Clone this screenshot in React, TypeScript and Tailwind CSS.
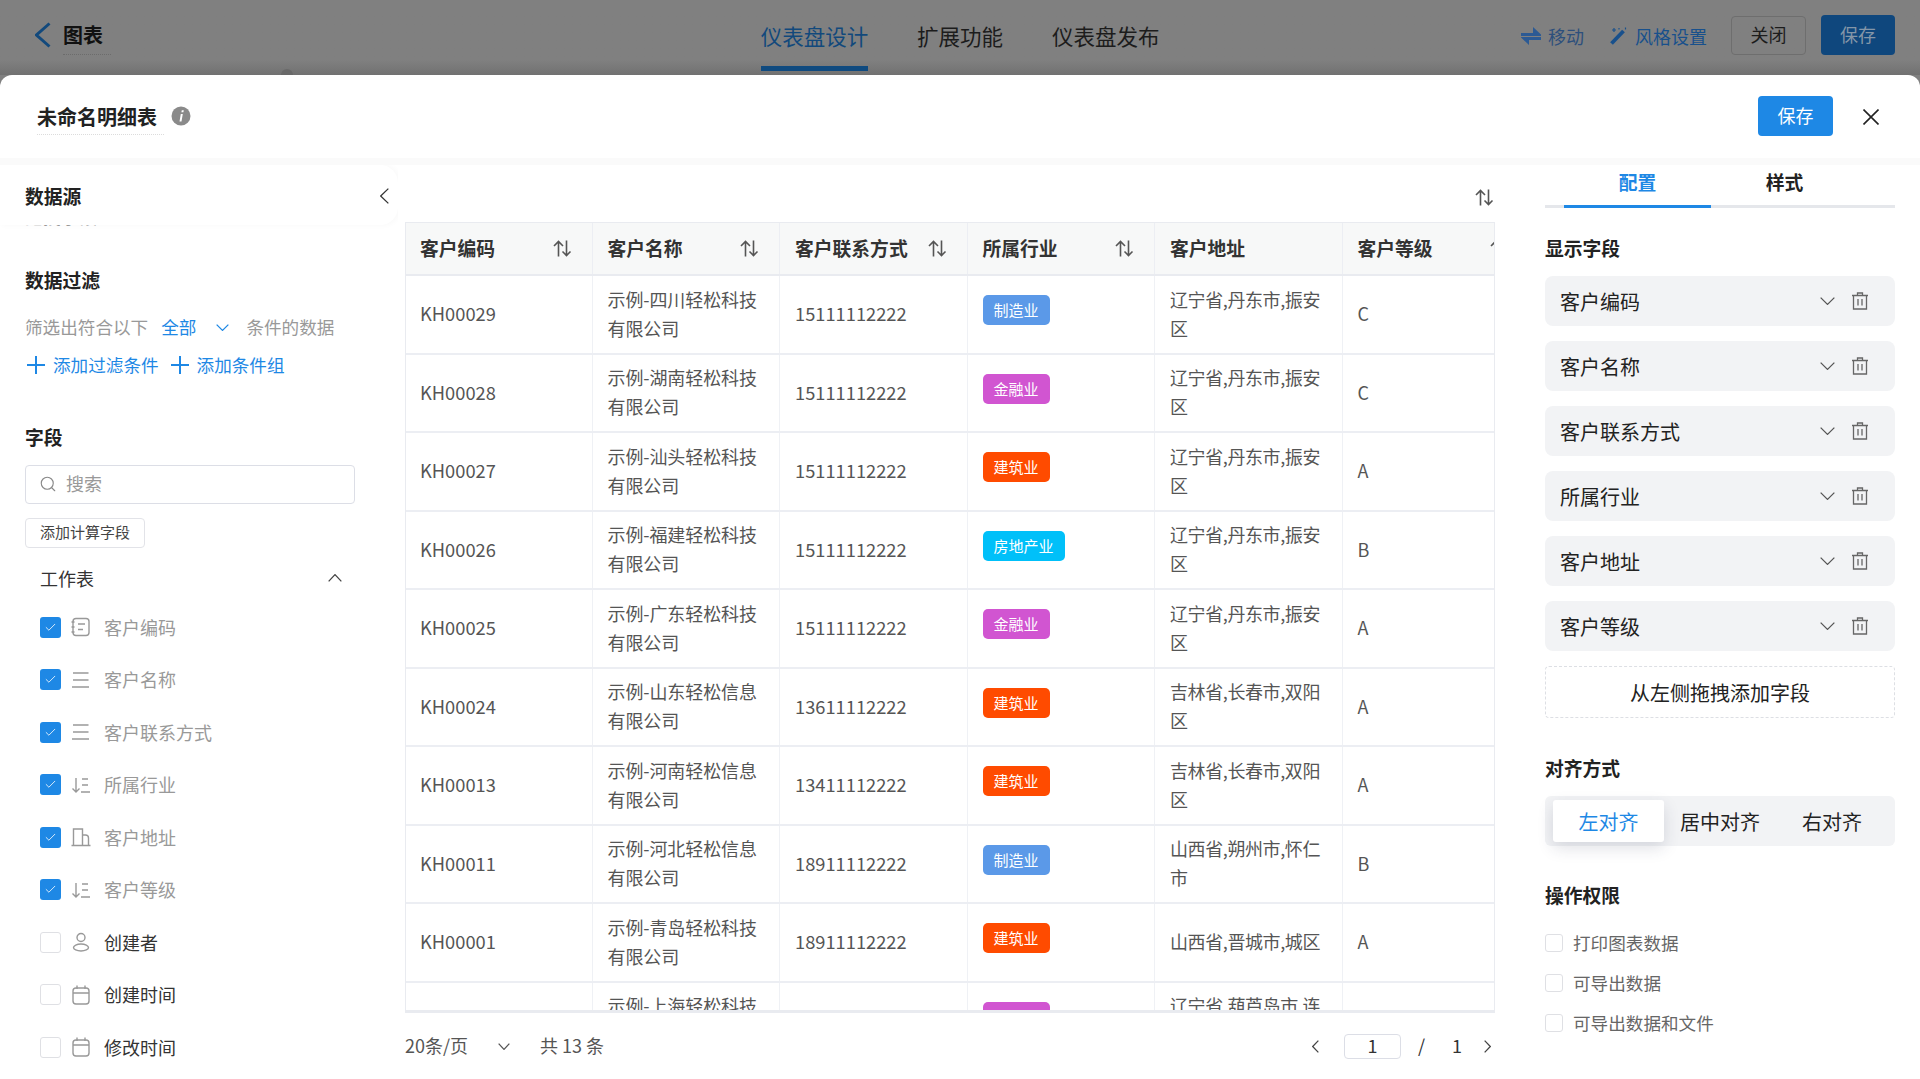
import React from "react";
import { Check, Search } from "lucide-react";

function Chev({ dir, w, h, color = "#555", sw = 1.5, className = "" }: { dir: "l" | "r" | "u" | "d"; w: number; h: number; color?: string; sw?: number; className?: string }) {
  const m = sw / 2;
  const d =
    dir === "l" ? `M${w - m} ${m}L${m} ${h / 2}L${w - m} ${h - m}` :
    dir === "r" ? `M${m} ${m}L${w - m} ${h / 2}L${m} ${h - m}` :
    dir === "u" ? `M${m} ${h - m}L${w / 2} ${m}L${w - m} ${h - m}` :
    `M${m} ${m}L${w / 2} ${h - m}L${w - m} ${m}`;
  return (
    <svg viewBox={`0 0 ${w} ${h}`} width={w} height={h} fill="none" stroke={color} strokeWidth={sw} className={className}>
      <path d={d} />
    </svg>
  );
}

function PlusIcon({ className = "" }: { className?: string }) {
  return (
    <svg viewBox="0 0 18 18" width="18" height="18" fill="none" stroke="#1e88e5" strokeWidth="2" className={className}>
      <path d="M0 9h18M9 0v18" />
    </svg>
  );
}

function SortIcon({ className = "" }: { className?: string }) {
  return (
    <svg viewBox="0 0 19 17" width="19" height="17" fill="none" stroke="#555" strokeWidth="1.6" className={className}>
      <path d="M5.5 16.5V1.5M1 6l4.5-4.5L10 6" />
      <path d="M13.5 .5v15M9.5 11.5l4 4 4-4" />
    </svg>
  );
}

function TrashIcon() {
  return (
    <svg viewBox="0 0 18 18" width="18" height="18" fill="none" stroke="#666" strokeWidth="1.3">
      <path d="M1 3.5h16M6.5 3.5V1h5v2.500M2.500 3.500V17h13V3.500M7 7v6.500M11 7v6.500" />
    </svg>
  );
}

function FieldIcon({ kind }: { kind: string }) {
  const p = { fill: "none", stroke: "#999", strokeWidth: 1.4 };
  return (
    <svg viewBox="0 0 20 20" width="20" height="20" {...p}>
      {kind === "id" && (
        <>
          <rect x="2" y="1.500" width="16" height="17" rx="3" />
          <path d="M7 7h7M7 12.500h5M.5 5h3M.5 10h3M.5 15h3" />
        </>
      )}
      {kind === "text" && <path d="M2 3h15.500M2 10h15.500M1 17h17" />}
      {kind === "num" && <path d="M5 3v14M1.500 13.500 5 17l3.500-3.500M11 4h6M11 10h6M10 17h9" />}
      {kind === "geo" && <path d="M0.500 18.500h19M2.500 18.500V2h9v16.500M11.500 8h3a3 3 0 0 1 3 3v7.500" />}
      {kind === "user" && (
        <>
          <circle cx="10" cy="5.500" r="4" />
          <ellipse cx="10" cy="15.500" rx="7.500" ry="3.500" />
        </>
      )}
      {kind === "date" && (
        <>
          <rect x="2" y="3" width="16" height="16" rx="3" />
          <path d="M2 8h16M6 .5V4M14 .5V4" />
        </>
      )}
    </svg>
  );
}

const fields: [string, string, boolean][] = [
  ["id", "客户编码", true],
  ["text", "客户名称", true],
  ["text", "客户联系方式", true],
  ["num", "所属行业", true],
  ["geo", "客户地址", true],
  ["num", "客户等级", true],
  ["user", "创建者", false],
  ["date", "创建时间", false],
  ["date", "修改时间", false],
];

const tagClass: Record<string, string> = {
  制造业: "bg-[#5b99e8]",
  金融业: "bg-[#d155d1]",
  建筑业: "bg-[#ff4b00]",
  房地产业: "bg-[#00c0f9]",
};

const rows = [
  ["KH00029", "示例-四川轻松科技有限公司", "15111112222", "制造业", "辽宁省,丹东市,振安区", "C"],
  ["KH00028", "示例-湖南轻松科技有限公司", "15111112222", "金融业", "辽宁省,丹东市,振安区", "C"],
  ["KH00027", "示例-汕头轻松科技有限公司", "15111112222", "建筑业", "辽宁省,丹东市,振安区", "A"],
  ["KH00026", "示例-福建轻松科技有限公司", "15111112222", "房地产业", "辽宁省,丹东市,振安区", "B"],
  ["KH00025", "示例-广东轻松科技有限公司", "15111112222", "金融业", "辽宁省,丹东市,振安区", "A"],
  ["KH00024", "示例-山东轻松信息有限公司", "13611112222", "建筑业", "吉林省,长春市,双阳区", "A"],
  ["KH00013", "示例-河南轻松信息有限公司", "13411112222", "建筑业", "吉林省,长春市,双阳区", "A"],
  ["KH00011", "示例-河北轻松信息有限公司", "18911112222", "制造业", "山西省,朔州市,怀仁市", "B"],
  ["KH00001", "示例-青岛轻松科技有限公司", "18911112222", "建筑业", "山西省,晋城市,城区", "A"],
  ["KH00010", "示例-上海轻松科技有限公司", "18911112222", "金融业", "辽宁省,葫芦岛市,连山区", "A"],
];

const heads = ["客户编码", "客户名称", "客户联系方式", "所属行业", "客户地址", "客户等级"];

function cellText(i: number) {
  if (i === 0 || i === 2) return "pb-[1px] text-[18.300px]";
  if (i === 1) return "pb-[1px] tracking-[-0.1px]";
  if (i === 4) return "pb-[1px] tracking-[-0.4px]";
  return "pb-[1px]";
}

function Title({ children, className = "" }: { children: React.ReactNode; className?: string }) {
  return <div className={`h-[26px] leading-[26px] text-[18.800px] font-bold text-[#222] ${className}`}>{children}</div>;
}

function TopBar() {
  return (
    <div className="relative h-[75px] shrink-0 flex items-start bg-[#808080] bg-gradient-to-b from-[#808080] from-80% to-[#717171]">
      <div className="absolute left-[281px] top-[69px] w-[12px] h-[12px] rounded-full bg-[#696969]" />
      <div className="w-[761px] shrink-0 flex items-center pl-[35px] h-[72px]">
        <Chev dir="l" w={16} h={26} color="#12497c" sw={3} className="-mt-[2px]" />
        <div className="ml-[12px] text-[20px] font-bold text-[#111] border-b border-dotted border-[#6c6c6c] h-[35px] leading-[30px] w-[48px] mt-[2px]">图表</div>
      </div>
      <div className="flex gap-[49px] text-[21.500px] text-[#1c1c1c] whitespace-nowrap">
        <div className="h-[71px] leading-[71px] border-b-[5px] border-[#0f4a7f] text-[#12497c] w-[107px] flex justify-center">仪表盘设计</div>
        <div className="h-[71px] leading-[71px]">扩展功能</div>
        <div className="h-[71px] leading-[71px]">仪表盘发布</div>
      </div>
      <div className="ml-auto pr-[25px] flex items-center h-[70px] text-[18px]">
        <svg viewBox="0 0 20 18" width="20" height="18" fill="#2c5a94" className="mr-[7px] mt-[2px]">
          <path d="M12 0l8 7.500V9H0V6h12zM8 18 0 10.500V10h20v3H8z" />
        </svg>
        <span className="text-[#2d4f7c] mt-[2px] mr-[26px]">移动</span>
        <svg viewBox="0 0 18 18" width="18" height="18" fill="none" className="mr-[7px] mt-[2px]">
          <path d="M1.500 16.500 13.500 4" stroke="#18508c" strokeWidth="3.800" />
          <path d="M4 1v4M2 3h4M15.500 .5v2M9 1v1.500" stroke="#18508c" strokeWidth="1.200" />
        </svg>
        <span className="text-[#18508c] mt-[2px] mr-[24px]">风格设置</span>
        <div className="w-[75px] h-[39px] pb-[2px] rounded-[4px] border border-[#6e6e6e] flex items-center justify-center text-[#1c1c1c]">关闭</div>
        <div className="w-[74px] h-[40px] pb-[2px] ml-[15px] rounded-[4px] bg-[#0f477d] flex items-center justify-center text-[#8496a8]">保存</div>
      </div>
    </div>
  );
}

function LeftPanel() {
  return (
    <div className="w-[398px] shrink-0 overflow-hidden">
      <div className="h-[60px] rounded-r-[18px] shadow-[2px_0_6px_rgba(0,0,0,0.03)] flex items-center justify-between pl-[25px] pr-[9px] pt-[2px]">
        <Title>数据源</Title>
        <Chev dir="l" w={9} h={16} color="#333" sw={1.3} />
      </div>
      <div className="pl-[25px] pr-[43px]">
        <div className="h-[4px] overflow-hidden text-[18px] text-[#999]">
          <div className="-mt-[22px] leading-[26px]">拖拽字段。</div>
        </div>
        <Title className="mt-[38px]">数据过滤</Title>
        <div className="mt-[21px] h-[26px] leading-[26px] flex items-center text-[17.600px] text-[#999]">
          <span>筛选出符合以下</span>
          <span className="ml-[13px] text-[#1e88e5]">全部</span>
          <Chev dir="d" w={13} h={7} color="#1e88e5" sw={1.3} className="ml-[20px]" />
          <span className="ml-[17px]">条件的数据</span>
        </div>
        <div className="mt-[12px] h-[26px] leading-[26px] flex items-center text-[17.600px] text-[#1e88e5]">
          <PlusIcon className="ml-[2px]" />
          <span className="ml-[8px]">添加过滤条件</span>
          <PlusIcon className="ml-[12px]" />
          <span className="ml-[8px]">添加条件组</span>
        </div>
        <Title className="mt-[46px]">字段</Title>
        <div className="mt-[15px] h-[39px] pb-[2px] rounded-[4px] border border-[#dcdee6] flex items-center pl-[13px] text-[18px] text-[#999]">
          <Search className="w-[18px] h-[18px] text-[#888]" strokeWidth={1.5} />
          <span className="ml-[9px]">搜索</span>
        </div>
        <div className="mt-[14px] w-[120px] h-[30px] pb-[2px] rounded-[4px] border border-[#e2e3e8] flex items-center justify-center text-[15px] text-[#444]">添加计算字段</div>
        <div className="mt-[17px] h-[26px] pl-[15px] pr-[13px] flex items-center justify-between text-[18px] text-[#333]">
          <span>工作表</span>
          <Chev dir="u" w={14} h={8} color="#444" sw={1.3} />
        </div>
        <div className="mt-[9.750px] pl-[15px]">
          {fields.map(([k, name, on]) => (
            <div key={name} className="h-[52.500px] flex items-center">
              {on ? (
                <div className="w-[21px] h-[21px] rounded-[3px] bg-[#1e88e5] flex items-center justify-center">
                  <Check className="w-[13px] h-[13px] text-white" strokeWidth={1.500} />
                </div>
              ) : (
                <div className="w-[21px] h-[21px] rounded-[3px] border border-[#dfe0e4]" />
              )}
              <div className="ml-[10px]"><FieldIcon kind={k} /></div>
              <span className={`ml-[13px] text-[18px] ${on ? "text-[#999]" : "text-[#333]"}`}>{name}</span>
            </div>
          ))}
        </div>
      </div>
    </div>
  );
}

function Center() {
  return (
    <div className="w-[1090px] shrink-0 ml-[7px]">
      <div className="h-[57px] flex justify-end items-center pt-[8px] pr-[1px]">
        <SortIcon />
      </div>
      <div className="h-[791px] overflow-hidden border-l border-r border-t border-b-[3px] border-[#e9ebf0]">
        <div className="w-[1300px] -ml-px">
          <div className="h-[53px] flex bg-[#f7f8f8] border-b-2 border-[#e9ebf0]">
            {heads.map((h, i) => (
              <div key={h} className="w-[187.500px] shrink-0 border-r border-[#eceef3] flex items-center justify-between pl-[15px] pr-[20px] text-[18.800px] font-bold text-[#333]">
                <span>{h}</span>
                {i !== 4 && <SortIcon />}
              </div>
            ))}
          </div>
          {rows.map((r) => (
            <div key={r[0]} className="h-[78.500px] flex border-b-2 border-[#eceef3] text-[18px] leading-[29px] text-[#555]">
              {r.map((c, i) => (
                <div key={i} className="w-[187.500px] shrink-0 border-r border-[#eff1f5] flex items-center pl-[15px] pr-[15px]">
                  {i === 3 ? (
                    <span className={`-mt-[8px] h-[30px] px-[11px] rounded-[5px] text-[15px] leading-[29px] text-white ${tagClass[c]}`}>{c}</span>
                  ) : (
                    <span className={cellText(i)}>{c}</span>
                  )}
                </div>
              ))}
            </div>
          ))}
        </div>
      </div>
      <div className="mt-[20px] h-[26px] flex items-center text-[18px] text-[#555]">
        <span className="pb-[2px]">20条/页</span>
        <Chev dir="d" w={12} h={7} color="#555" sw={1.3} className="ml-[30px]" />
        <span className="ml-[30px] pb-[2px]">共 13 条</span>
        <Chev dir="l" w={7} h={13} color="#444" sw={1.3} className="ml-auto" />
        <div className="ml-[25px] w-[57px] h-[25px] pb-[2px] rounded-[4px] border border-[#dcdee6] flex items-center justify-center text-[#333]">1</div>
        <span className="ml-[17px] text-[#333] pb-[2px]">/</span>
        <span className="ml-[27px] text-[#333] pb-[2px]">1</span>
        <Chev dir="r" w={7} h={13} color="#444" sw={1.3} className="ml-[22px] mr-[4px]" />
      </div>
    </div>
  );
}

function RightPanel() {
  const seg = "flex items-center justify-center text-[20px] pt-[1px]";
  return (
    <div className="w-[350px] shrink-0 ml-[50px]">
      <div className="h-[43px] flex pl-[19px] border-b-[3px] border-[#e5e7eb] text-[18.800px] font-bold">
        <div className="w-[147px] h-[43px] border-b-[3px] border-[#1e88e5] text-[#1e88e5] flex justify-center pt-[4px] leading-[26px]">配置</div>
        <div className="w-[147px] h-[40px] text-[#222] flex justify-center pt-[4px] leading-[26px]">样式</div>
      </div>
      <Title className="mt-[27px]">显示字段</Title>
      <div className="mt-[15px] flex flex-col gap-[15px]">
        {heads.map((h) => (
          <div key={h} className="h-[50px] rounded-[8px] bg-[#f2f3f5] flex items-center pl-[15px] pr-[26px] text-[20px] text-[#222]">
            <span className="pt-[2px]">{h}</span>
            <Chev dir="d" w={15} h={8} color="#555" sw={1.300} className="ml-auto mr-[-1px]" />
            <div className="ml-[17px]"><TrashIcon /></div>
          </div>
        ))}
      </div>
      <div className="mt-[15px] h-[52px] pt-[1px] rounded-[4px] border border-dashed border-[#dddfe4] flex items-center justify-center text-[20px] text-[#222]">从左侧拖拽添加字段</div>
      <Title className="mt-[37px]">对齐方式</Title>
      <div className="mt-[15px] h-[50px] rounded-[6px] bg-[#f2f3f5] flex items-center pl-[8px] text-[#222]">
        <div className={`${seg} w-[111px] h-[42px] rounded-[3px] bg-white text-[#1e88e5] shadow-[0_6px_16px_rgba(40,50,80,0.15)]`}>左对齐</div>
        <div className={`${seg} w-[112px] h-[42px]`}>居中对齐</div>
        <div className={`${seg} w-[112px] h-[42px]`}>右对齐</div>
      </div>
      <Title className="mt-[36px]">操作权限</Title>
      <div className="mt-[22px] flex flex-col gap-[14px]">
        {["打印图表数据", "可导出数据", "可导出数据和文件"].map((t) => (
          <div key={t} className="h-[26px] flex items-center text-[17.600px] text-[#666]">
            <div className="w-[18px] h-[18px] rounded-[3px] border border-[#dfe0e4]" />
            <span className="ml-[10px]">{t}</span>
          </div>
        ))}
      </div>
    </div>
  );
}

export default function App() {
  return (
    <div className="w-[1920px] h-[1079px] overflow-hidden flex flex-col bg-[#808080] font-['Noto_Sans_CJK_SC','Noto_Sans',sans-serif]">
      <TopBar />
      <div className="relative flex-1 min-h-0 rounded-t-[12px] bg-white flex flex-col">
        <div className="h-[83px] shrink-0 flex items-center pl-[37px] pr-[41px]">
          <div className="text-[20px] font-bold text-[#222] border-b border-dotted border-[#dcdcdc] h-[36px] leading-[36px] w-[127px] mt-[1px]">未命名明细表</div>
          <svg viewBox="0 0 20 20" width="20" height="20" className="ml-[7px] -mt-[1px]">
            <circle cx="10" cy="10" r="9.500" fill="#8a8a8a" />
            <path d="M10.800 4.200h2l-.4 2h-2zM9.800 8h2L10.500 15.500h-2z" fill="#fff" />
          </svg>
          <div className="ml-auto w-[75px] h-[40px] -mt-[1px] pb-[2px] rounded-[4px] bg-[#1e88e5] text-white text-[18px] flex items-center justify-center">保存</div>
          <svg viewBox="0 0 16 16" width="16" height="16" fill="none" stroke="#222" strokeWidth="1.600" className="ml-[30px]">
            <path d="M.5 .5l15 15M15.500 .5l-15 15" />
          </svg>
        </div>
        <div className="h-[7px] shrink-0 bg-[#fafafa]" />
        <div className="flex-1 min-h-0 flex">
          <LeftPanel />
          <Center />
          <RightPanel />
        </div>
      </div>
    </div>
  );
}
